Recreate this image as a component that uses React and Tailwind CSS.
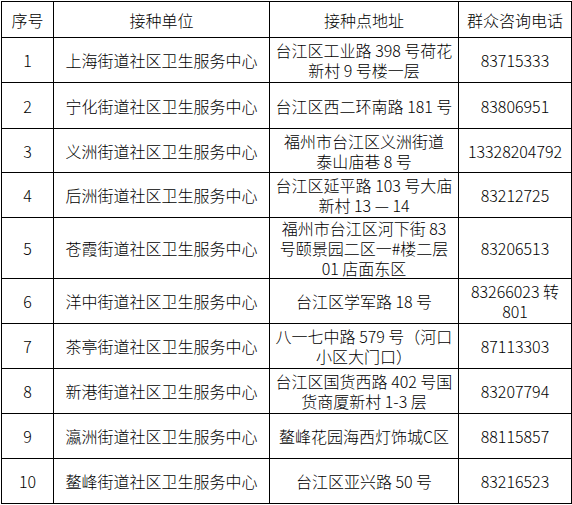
const ROWS = [
  {
    h: "h-[45px]",
    no: "1",
    unit: "上海街道社区卫生服务中心",
    addr: ["台江区工业路 398 号荷花", "新村 9 号楼一层"],
    tel: ["83715333"],
  },
  {
    h: "h-[46px]",
    no: "2",
    unit: "宁化街道社区卫生服务中心",
    addr: ["台江区西二环南路 181 号"],
    tel: ["83806951"],
  },
  {
    h: "h-[44px]",
    no: "3",
    unit: "义洲街道社区卫生服务中心",
    addr: ["福州市台江区义洲街道", "泰山庙巷 8 号"],
    tel: ["13328204792"],
  },
  {
    h: "h-[45px]",
    no: "4",
    unit: "后洲街道社区卫生服务中心",
    addr: ["台江区延平路 103 号大庙", "新村 13 — 14"],
    tel: ["83212725"],
  },
  {
    h: "h-[61px]",
    no: "5",
    unit: "苍霞街道社区卫生服务中心",
    addr: ["福州市台江区河下街 83", "号颐景园二区一#楼二层", "01 店面东区"],
    tel: ["83206513"],
  },
  {
    h: "h-[45px]",
    no: "6",
    unit: "洋中街道社区卫生服务中心",
    addr: ["台江区学军路 18 号"],
    tel: ["83266023 转", "801"],
  },
  {
    h: "h-[45px]",
    no: "7",
    unit: "茶亭街道社区卫生服务中心",
    addr: ["八一七中路 579 号（河口", "小区大门口）"],
    tel: ["87113303"],
  },
  {
    h: "h-[45px]",
    no: "8",
    unit: "新港街道社区卫生服务中心",
    addr: ["台江区国货西路 402 号国", "货商厦新村 1-3 层"],
    tel: ["83207794"],
  },
  {
    h: "h-[45px]",
    no: "9",
    unit: "瀛洲街道社区卫生服务中心",
    addr: ["鳌峰花园海西灯饰城C区"],
    tel: ["88115857"],
  },
  {
    h: "h-[45px]",
    no: "10",
    unit: "鳌峰街道社区卫生服务中心",
    addr: ["台江区亚兴路 50 号"],
    tel: ["83216523"],
  },
];

const Cell = ({ h, lines }) => (
  <div
    className={`${h} border-r border-b border-black flex flex-col items-center justify-center text-center`}
  >
    {lines.map((line, i) => (
      <span key={i} className="block h-[20px] whitespace-nowrap leading-[20px]">
        {line}
      </span>
    ))}
  </div>
);

const App = () => {
  return (
    <div
      className="w-[572px] h-[505px] bg-white text-black text-[16px] font-light pt-px pl-px"
      style={{ fontFamily: '"Noto Sans CJK SC", "Noto Sans", sans-serif' }}
    >
      <div className="grid grid-cols-[52px_216px_189px_113px] w-[571px] border-l border-t border-black">
        {/* HEADER */}
        <Cell h="h-[36px]" lines={["序号"]} />
        <Cell h="h-[36px]" lines={["接种单位"]} />
        <Cell h="h-[36px]" lines={["接种点地址"]} />
        <Cell h="h-[36px]" lines={["群众咨询电话"]} />

        {/* ROWS */}
        {ROWS.map((row) => (
          <div key={row.no} className="contents">
            <Cell h={row.h} lines={[row.no]} />
            <Cell h={row.h} lines={[row.unit]} />
            <Cell h={row.h} lines={row.addr} />
            <Cell h={row.h} lines={row.tel} />
          </div>
        ))}
      </div>
    </div>
  );
};

export default App;
